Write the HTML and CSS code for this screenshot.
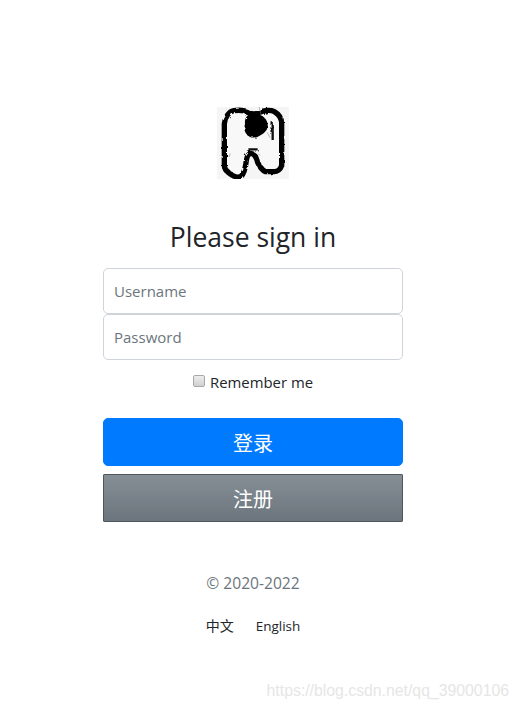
FILE: index.html
```html
<!DOCTYPE html>
<html lang="zh">
<head>
  <meta charset="UTF-8" />
  <meta name="viewport" content="width=device-width, initial-scale=1.0"/>
  <title>Please sign in</title>
  <link rel="stylesheet" href="styles.css">
</head>
<body>
  <div class="container">
    <form class="signin">
      <svg class="logo" viewBox="0 0 216 216" role="img" aria-label="logo">
        <defs>
          <filter id="ink" x="-5%" y="-5%" width="110%" height="110%">
            <feTurbulence type="fractalNoise" baseFrequency="0.07" numOctaves="2" seed="4"/>
            <feDisplacementMap in="SourceGraphic" scale="9"/>
            <feGaussianBlur stdDeviation="0.8"/>
          </filter>
        </defs>
        <rect width="216" height="216" fill="#f5f5f5"/>
        <g filter="url(#ink)">
          <path class="logo-fill" d="M22 176 L22 50 C24 30 36 14 50 11 C68 8 84 10 96 18 C110 24 118 22 128 16 C140 10 160 8 172 14 C186 22 194 36 194 50 L194 176 C190 188 180 194 172 194 L146 194 C136 190 128 180 122 166 C118 150 112 140 102 139 C94 140 90 148 88 160 C86 178 82 200 72 208 C60 214 48 208 36 198 C28 192 22 186 22 176 Z"/>
          <path class="logo-blob" d="M84 50 C82 34 92 20 106 22 C126 18 150 30 152 52 C154 72 138 80 128 86 C114 96 94 92 88 80 C80 72 82 60 84 50 Z"/>
          <path class="logo-line" d="M167 46 L167 99 M94 127 L122 127"/>
        </g>
        <path class="logo-thin" d="M126 0 L132 22 M150 76 L160 92 M40 140 L36 150 M124 140 L130 146"/>
      </svg>
      <h1>Please sign in</h1>
      <input class="field" type="text" placeholder="Username" />
      <input class="field" type="password" placeholder="Password" />
      <label class="remember">
        <input type="checkbox" />
        Remember me
      </label>
      <button class="btn btn-primary" type="submit">登录</button>
      <button class="btn btn-secondary" type="button">注册</button>
      <p class="copyright">© 2020-2022</p>
      <div class="lang">
        <a class="lang-zh" href="#">中文</a>
        <a href="#">English</a>
      </div>
    </form>
  </div>
  <div class="watermark">https://blog.csdn.net/qq_39000106</div>
</body>
</html>
```

FILE: styles.css
```css
* {
  box-sizing: border-box;
}
body {
  font-family: "Open Sans", "Noto Sans CJK SC", sans-serif;
  margin: 0;
  background: #fff;
  color: #212529;
}
.container {
  width: 506px;
  padding-top: 107px;
}
.signin {
  width: 300px;
  margin: 0 auto;
  display: flex;
  flex-direction: column;
  align-items: center;
}
.logo {
  width: 72px;
  height: 72px;
  display: block;
  margin-bottom: 38px;
}
.logo-fill {
  fill: #f8f8f8;
  stroke: #050505;
  stroke-width: 16;
  stroke-linejoin: round;
}
.logo-blob {
  fill: #000;
}
.logo-line {
  fill: none;
  stroke: #111;
  stroke-width: 7;
}
.logo-thin {
  fill: none;
  stroke: #777;
  stroke-width: 1.5;
}
h1 {
  font-size: 26.5px;
  font-weight: 400;
  line-height: 40px;
  margin: 0 0 11px;
  text-align: center;
}
.field {
  width: 100%;
  height: 46px;
  padding: 0 10px;
  font: inherit;
  font-size: 15px;
  color: #495057;
  background: #fff;
  border: 1px solid #ced4da;
  border-radius: 5px;
}
.field::placeholder {
  color: #6c757d;
  opacity: 1;
}
.remember {
  display: flex;
  align-items: center;
  gap: 5px;
  height: 24px;
  margin: 10px 0 24px;
  font-size: 14.9px;
}
.remember input {
  appearance: none;
  width: 12px;
  height: 12px;
  margin: 0 0 3px;
  border: 1px solid #a8a8a8;
  border-radius: 2px;
  background: linear-gradient(#ededed, #d0d0d0);
}
.btn {
  width: 100%;
  height: 48px;
  font-family: "Noto Sans CJK SC", sans-serif;
  font-size: 20px;
  color: #fff;
  cursor: pointer;
}
.btn-primary {
  background: #007bff;
  border: 1px solid #007bff;
  border-radius: 5px;
  margin-bottom: 8px;
}
.btn-secondary {
  background: linear-gradient(#868e96, #6c757d);
  border: 1px solid #4f565c;
  border-radius: 1px;
}
.copyright {
  margin: 49px 0 0;
  font-size: 15.6px;
  line-height: 24px;
  color: #6c757d;
}
.lang {
  display: flex;
  gap: 22px;
  margin-top: 19px;
  font-size: 13.5px;
  line-height: 24px;
}
.lang a {
  color: #212529;
  text-decoration: none;
}
.lang .lang-zh {
  font-size: 14px;
}
.watermark {
  position: absolute;
  right: 9px;
  top: 682px;
  font-family: "Liberation Sans", sans-serif;
  font-size: 15.8px;
  color: #e6e6e6;
}
```
